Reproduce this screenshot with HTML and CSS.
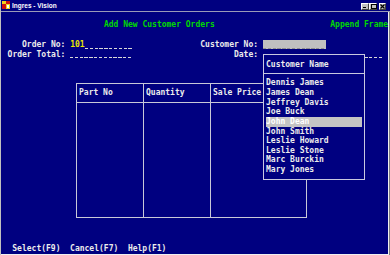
FILE: index.html
```html
<!DOCTYPE html>
<html lang="en">
<head>
<meta charset="UTF-8">
<meta name="viewport" content="width=device-width, initial-scale=1.0">
<title>Ingres - Vision</title>
<link rel="stylesheet" href="styles.css">
</head>
<body>
<div class="window">
    <div class="titlebar">
        <svg class="app-icon" width="8" height="8" viewBox="0 0 8 8">
            <rect x="0" y="0" width="8" height="8" fill="#f0d020"/>
            <rect x="0" y="3" width="4" height="5" fill="#d01010"/>
            <rect x="4" y="0" width="4" height="3" fill="#d01010"/>
            <rect x="5" y="4" width="2" height="3" fill="#fff"/>
        </svg>
        <span class="title">Ingres - Vision</span>
        <div class="buttons">
            <span class="btn btn-min"></span>
            <span class="btn btn-max"></span>
            <span class="btn btn-close">
                <svg width="7" height="7" viewBox="0 0 7 7"><path d="M1.5 1.5 L5.5 5.5 M5.5 1.5 L1.5 5.5" stroke="#000" stroke-width="1.2"/></svg>
            </span>
        </div>
    </div>
    <div class="frame">
        <div class="screen">
            <div class="line">                    <span class="green">Add New Customer Orders</span>                        <span class="green">Append Frame</span></div>
            <div class="fields">
                <div class="line">   Order No: <span class="yellow">101</span><span class="blank">__________</span>              Customer No: <span class="input">_____________</span></div>
                <div class="line">Order Total: <span class="blank">_____________</span>                     Date: <span class="blank">_________________________</span></div>
            </div>
            <div class="table">
                <div class="cell head">Part No</div>
                <div class="cell head">Quantity</div>
                <div class="cell head">Sale Price</div>
                <div class="cell"></div>
                <div class="cell"></div>
                <div class="cell"></div>
            </div>
            <div class="keys">Select(F9)  Cancel(F7)  Help(F1)</div>

            <!-- lookup popup over the date field and the table -->
            <div class="popup">
                <div class="popup-head">Customer Name</div>
                <div class="popup-list">
                    <div>Dennis James</div>
                    <div>James Dean</div>
                    <div>Jeffrey Davis</div>
                    <div>Joe Buck</div>
                    <div class="selected">John Dean</div>
                    <div>John Smith</div>
                    <div>Leslie Howard</div>
                    <div>Leslie Stone</div>
                    <div>Marc Burckin</div>
                    <div>Mary Jones</div>
                </div>
            </div>
        </div>
    </div>
</div>
</body>
</html>
```

FILE: styles.css
```css
* {
    box-sizing: border-box;
}
body {
    margin: 0;
    background-color: #c0c0c0;
}
.window {
    width: 390px;
    height: 255px;
    display: flex;
    flex-direction: column;
    border-left: 1px solid #c0c0c0;
    background-color: #c0c0c0;
    font-family: "DejaVu Sans Mono", monospace;
    font-size: 8px;
    color: #ececec;
}
.titlebar {
    flex: none;
    height: 12px;
    display: flex;
    align-items: center;
    padding: 0 4px 0 1px;
    background-color: #000080;
    border-bottom: 1px solid #9a9ab8;
}
.app-icon {
    display: block;
    margin-top: -1px;
}
.title {
    margin-left: 2px;
    font-family: "Liberation Sans", Arial, sans-serif;
    font-size: 6.5px;
    font-weight: bold;
    color: #fff;
}
.buttons {
    margin-left: auto;
    display: flex;
    margin-top: 1px;
}
.btn {
    width: 8px;
    height: 7px;
    background-color: #c0c0c0;
    border-top: 1px solid #fff;
    border-left: 1px solid #fff;
    border-right: 1px solid #404040;
    border-bottom: 1px solid #404040;
    position: relative;
}
.btn-min:after {
    content: "";
    position: absolute;
    left: 1px;
    bottom: 1px;
    width: 3px;
    height: 1px;
    background-color: #000;
}
.btn-max:after {
    content: "";
    position: absolute;
    left: 1px;
    top: 0;
    width: 4px;
    height: 3px;
    border: 1px solid #000;
}
.btn-close {
    width: 7px;
    margin-left: 2px;
}
.btn-close svg {
    position: absolute;
    left: -1px;
    top: -1px;
}
.frame {
    flex: 1;
    display: flex;
    padding: 0 4px 2px 0;
    border-right: 1px solid #808080;
    border-bottom: 1px solid #808080;
}
.screen {
    flex: 1;
    position: relative;
    padding-top: 8px;
    background-color: #000080;
    border-right: 1px solid #f0f0f0;
    border-bottom: 1px solid #f0f0f0;
    font-weight: bold;
}
.line {
    white-space: pre;
    line-height: 9.6px;
    padding-left: 6.6px;
    overflow: hidden;
}
.green {
    color: #00d800;
}
.yellow {
    color: #e8e800;
}
/* underscores drawn as a dashed rule, like the terminal font */
.blank {
    color: transparent;
    background-image: repeating-linear-gradient(90deg, #d8d8d8 0, #d8d8d8 3.4px, transparent 3.4px, transparent 4.816px);
    background-size: 100% 1px;
    background-position: 0 7.4px;
    background-repeat: no-repeat;
}
.input {
    color: transparent;
    background-color: #c0c0c0;
    background-image: repeating-linear-gradient(90deg, #909090 0, #909090 3.4px, transparent 3.4px, transparent 4.816px);
    background-size: 100% 1px;
    background-position: 0 7.4px;
    background-repeat: no-repeat;
}
.fields {
    margin-top: 10.6px;
}
.table {
    display: grid;
    grid-template-columns: 66px 67px 96px;
    grid-template-rows: 19px 114px;
    width: 231px;
    margin: 24px 0 0 75px;
    border: 1px solid #c8c8d8;
}
.cell + .cell {
    border-left: 1px solid #c8c8d8;
}
.cell:nth-child(4) {
    border-left: none;
}
.head {
    padding-left: 2px;
    line-height: 18px;
    border-bottom: 1px solid #c8c8d8;
}
.keys {
    margin-top: 26px;
    padding-left: 11.3px;
    white-space: pre;
    line-height: 9.6px;
}
.popup {
    position: absolute;
    left: 262px;
    top: 42px;
    width: 102px;
    height: 126px;
    border: 1px solid #c8c8e0;
    background-color: #000080;
}
.popup-head {
    padding: 4.5px 2px 3.9px;
    line-height: 9.6px;
    border-bottom: 1px solid #c8c8e0;
}
.popup-list {
    padding: 4.5px 2px 0;
}
.popup-list div {
    line-height: 9.63px;
    white-space: pre;
}
.popup-list .selected {
    background-color: #c4c4c4;
    color: #fff;
}
```
